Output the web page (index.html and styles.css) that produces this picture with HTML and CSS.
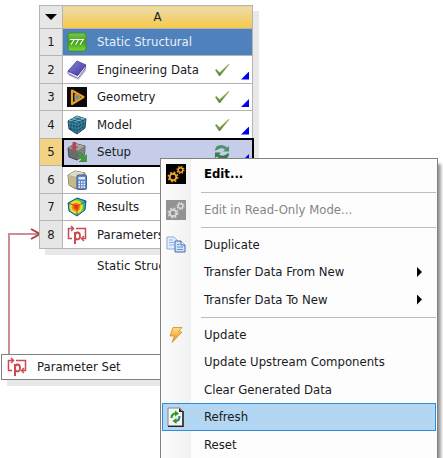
FILE: index.html
```
<!DOCTYPE HTML>
<html lang="en">
<head>
<title>Project Schematic</title>
<meta charset="utf-8" />
<link rel="stylesheet" href="styles.css">
</head>
<body>
<!-- shared icons -->
<svg class="defs" aria-hidden="true">
  <defs>
    <linearGradient id="gGreen" x1="0" y1="0" x2="0" y2="1"><stop offset="0" stop-color="#7cc94a"/><stop offset=".5" stop-color="#3fa01c"/><stop offset="1" stop-color="#7ed83c"/></linearGradient>
    <linearGradient id="gBook" x1="0" y1="0" x2="1" y2="1"><stop offset="0" stop-color="#8a85dc"/><stop offset="1" stop-color="#3c349c"/></linearGradient>
    <linearGradient id="gBolt" x1="0" y1="0" x2="0" y2="1"><stop offset="0" stop-color="#ffe07a"/><stop offset="1" stop-color="#ef8a1c"/></linearGradient>
    <linearGradient id="gTick" x1="0" y1="0" x2="0" y2="1"><stop offset="0" stop-color="#9dbb64"/><stop offset="1" stop-color="#5f8430"/></linearGradient>
    <radialGradient id="gHeat" cx=".45" cy=".5" r=".6"><stop offset="0" stop-color="#f0201a"/><stop offset=".3" stop-color="#f8761c"/><stop offset=".5" stop-color="#f4ee30"/><stop offset=".7" stop-color="#35c83c"/><stop offset=".85" stop-color="#24b8c8"/><stop offset="1" stop-color="#2048d8"/></radialGradient>
  </defs>
  <symbol id="tick" viewBox="0 0 16 14"><path d="M1 7 L2.500 6 L5.500 9.500 L14.500 1 L15.500 1.500 L6 13 H5 Z" fill="url(#gTick)"/></symbol>
  <symbol id="param" viewBox="0 0 20 20">
    <g fill="none" stroke="#cc4a50" stroke-width="1.500">
      <path d="M5 13.500 H1.500 V3.500 H6"/><path d="M4 1 L6.500 3.500 L4 6"/>
      <path d="M9 3.500 H18.500 V13.500 H15"/><path d="M17 11 L14.500 13.500 L17 16"/>
      <path d="M8 7 V19" stroke-width="2"/><ellipse cx="10.500" cy="11" rx="2.500" ry="3.500" stroke-width="1.800"/>
    </g>
  </symbol>
  <symbol id="gears" viewBox="0 0 20 20">
    <g fill="none" stroke="currentColor">
      <circle cx="7" cy="13" r="3.300" stroke-width="2"/>
      <circle cx="7" cy="13" r="4.800" stroke-width="1.400" stroke-dasharray="1.885 1.885"/>
      <circle cx="14.500" cy="6" r="2.300" stroke-width="1.500"/>
      <circle cx="14.500" cy="6" r="3.500" stroke-width="1.200" stroke-dasharray="1.374 1.374"/>
    </g>
  </symbol>
</svg>

<main class="schematic">
  <!-- link from the parameter set to the system -->
  <svg class="connector" viewBox="0 0 36 128" aria-hidden="true">
    <path d="M2 128 V8 H32" fill="none" stroke="#cb8f91" stroke-width="2"/>
    <path d="M24 3 L33 8 L24 13" fill="none" stroke="#a54246" stroke-width="2"/>
  </svg>

  <section class="system">
    <table class="cells">
      <thead>
        <tr><th><button class="drop" aria-label="System menu"></button></th><th class="letter">A</th></tr>
      </thead>
      <tbody>
        <tr class="title"><th>1</th><td><div class="cell">
          <svg class="icon" viewBox="0 0 20 20"><rect x="1" y="1" width="18" height="18" rx="2.500" fill="url(#gGreen)" stroke="#3d9420"/><path d="M3 7.500 H17 M7 8 L4 12.500 M11.500 8 L8.500 12.500 M16 8 L13 12.500" stroke="#fff" stroke-width="1.200" fill="none"/></svg>
          <span class="name">Static Structural</span></div></td></tr>
        <tr><th>2</th><td><div class="cell">
          <svg class="icon" viewBox="0 0 20 20"><path d="M2 14 L11 19.500 L19 8 V10.500 L11.500 20 L2 15.500Z" fill="#bbb"/><path d="M1 11 L10.500 15.500 L18.500 5 V8 L11 18.500 L1 13.500Z" fill="#eceaf6" stroke="#4c459c" stroke-width=".8"/><path d="M1 11 L10 1 L19 5 L10.500 15.500Z" fill="url(#gBook)" stroke="#443c9c" stroke-width=".8"/></svg>
          <span class="name">Engineering Data</span><svg class="state"><use href="#tick"/></svg><i class="corner"></i></div></td></tr>
        <tr><th>3</th><td><div class="cell">
          <svg class="icon" viewBox="0 0 20 20"><path d="M0 0H20V20H0Z" fill="#0b0b0b"/><path d="M5 3.500 L16.500 10 L5 17Z" fill="none" stroke="#e9a02c" stroke-width="2.200" stroke-linejoin="round"/><path d="M8 7 L13 10 L8 13.500Z" fill="#2f9ccc" stroke="#e9a02c"/></svg>
          <span class="name">Geometry</span><svg class="state"><use href="#tick"/></svg><i class="corner"></i></div></td></tr>
        <tr><th>4</th><td><div class="cell">
          <svg class="icon" viewBox="0 0 20 20"><path d="M1 6 L10 1 L19 4 L18 13 L10 19 L2 14Z" fill="#3b87a8" stroke="#1c4f68" stroke-linejoin="round"/><path d="M1 6 L10 1 L19 4 L10 8Z" fill="#71b8d2"/><path d="M10 8V19 M1 6 L10 8 L19 4 M4 4.500 L13 7 M7 2.500 L16 5.500 M4 7V15 M7 7.500V17 M13 7V17 M16 5.500V15 M1.500 10 L10 12 L18.500 8 M2 13 L10 15.500 L18 11 M14 2.500 L5 7" stroke="#183f54" stroke-width=".7" fill="none"/></svg>
          <span class="name">Model</span><svg class="state"><use href="#tick"/></svg><i class="corner"></i></div></td></tr>
        <tr class="selected"><th>5</th><td><div class="cell">
          <svg class="icon" viewBox="0 0 20 20"><path d="M1 6 L8 1.500 L18 4 L17.500 13 L10 18 L2 15Z" fill="#6c6c6c" stroke="#484848" stroke-linejoin="round"/><path d="M1 6 L8 1.500 L18 4 L11 8.500Z" fill="#a8a8a8"/><path d="M11 8.500V17.500 L17.500 13 L18 4Z" fill="#808080"/><path d="M5.500 0H9V4.500H11.500L7.500 9L3 4.500H5.500Z" fill="#b44a50"/><path d="M10 12.500 L13 10 L17.500 14.500 L19.500 12.500 V20 H12 L14.500 17.500Z" fill="#3f9a42" stroke="#2b7b30" stroke-width=".5"/></svg>
          <span class="name">Setup</span>
          <svg class="state" viewBox="0 0 16 14"><path d="M1 6 Q1 0 7 0 Q11 0 13 2.500 L15 1 V6.500 H9 L11 4.500 Q8 2.500 5 4 L1 6Z" fill="#4c9468"/><path d="M15 8 Q15 14 9 14 Q5 14 3 11.500 L1 13 V7.500 H7 L5 9.500 Q8 11.500 11 10Z" fill="#397a50"/></svg><i class="corner"></i></div></td></tr>
        <tr><th>6</th><td><div class="cell">
          <svg class="icon" viewBox="0 0 20 20"><path d="M1 5 L8 1 L18 3 L17 13 L9 19 L2 15Z" fill="#a79f78" stroke="#736b4b" stroke-linejoin="round"/><path d="M1 5 L8 1 L18 3 L9 7Z" fill="#e2dcbc"/><path d="M9 7V18.500 L2 15 L1 5Z" fill="#c2b98e"/><rect x="10" y="5" width="9.500" height="14.500" rx="1" fill="#6387c8" stroke="#4465a6"/><path d="M11.500 7H18V9.500H11.500Z" fill="#dbe9ff"/><path d="M11.500 12H18 M11.500 14.500H18 M11.500 17H18" stroke="#fff" stroke-width="1.500" stroke-dasharray="1.500 1"/></svg>
          <span class="name">Solution</span></div></td></tr>
        <tr><th>7</th><td><div class="cell">
          <svg class="icon" viewBox="0 0 20 20"><path d="M1 6 L10 1 L19 4 L18 13 L10 19 L2 14Z" fill="url(#gHeat)" stroke="#1e4ab0" stroke-linejoin="round"/><path d="M10 9V18 M2 6.500 L10 9 L18 5" stroke="#a33818" stroke-width=".8" fill="none"/></svg>
          <span class="name">Results</span></div></td></tr>
        <tr><th>8</th><td><div class="cell">
          <svg class="icon"><use href="#param"/></svg>
          <span class="name">Parameters</span></div></td></tr>
      </tbody>
    </table>
    <p class="caption">Static Structural</p>
  </section>

  <section class="param-set">
    <svg class="icon"><use href="#param"/></svg>
    <span>Parameter Set</span>
  </section>

  <div class="menu" role="menu">
    <button class="item default" role="menuitem"><span class="pic"><svg class="icon dark"><use href="#gears"/></svg></span>Edit...</button>
    <hr>
    <button class="item" role="menuitem" disabled><span class="pic"><svg class="icon grey"><use href="#gears"/></svg></span>Edit in Read-Only Mode...</button>
    <hr>
    <button class="item" role="menuitem"><span class="pic"><svg class="icon" viewBox="0 0 20 20"><path d="M1 2H8L11 5V14H1Z" fill="#e4effc" stroke="#91abd2"/><path d="M3 5H7 M3 7.500H8 M3 10H8" stroke="#89b2e3"/><path d="M9 6H15L19 10V17H9Z" fill="#d2e3f9" stroke="#4668ac"/><path d="M15 6V10H19" fill="#fff" stroke="#4668ac"/><path d="M11 9.500H13.500 M11 12H17 M11 14.500H17" stroke="#6996d6"/></svg></span>Duplicate</button>
    <button class="item sub" role="menuitem"><span class="pic"></span>Transfer Data From New</button>
    <button class="item sub" role="menuitem"><span class="pic"></span>Transfer Data To New</button>
    <hr>
    <button class="item" role="menuitem"><span class="pic"><svg class="icon" viewBox="0 0 20 20"><path d="M7 2.500H16L12.500 7H16L6 17.500L8.500 11H4Z" fill="url(#gBolt)" stroke="#cf8a2c" stroke-width=".8"/></svg></span>Update</button>
    <button class="item" role="menuitem"><span class="pic"></span>Update Upstream Components</button>
    <button class="item" role="menuitem"><span class="pic"></span>Clear Generated Data</button>
    <button class="item active" role="menuitem"><span class="pic"><svg class="icon" viewBox="0 0 20 20"><path d="M2 1H14L17 4V19H2Z" fill="#f4f4f4" stroke="#888"/><path d="M17 4V19.500H2" fill="none" stroke="#222" stroke-width="1.500"/><path d="M13 1V5H17Z" fill="#222"/><path d="M5.500 11 Q5.500 6.500 10 6.500" fill="none" stroke="#2b9a20" stroke-width="2"/><path d="M9 3.500L13 6.500L9 9.500Z" fill="#2b9a20"/><path d="M13.500 9 Q13.500 14 9.500 14" fill="none" stroke="#278a70" stroke-width="2"/><path d="M10.500 11V17L6.500 14Z" fill="#2b9a20"/></svg></span>Refresh</button>
    <button class="item" role="menuitem"><span class="pic"></span>Reset</button>
  </div>
</main>
</body>
</html>
```
FILE: styles.css
```
*{
	margin: 0;
	padding: 0;
	box-sizing: border-box;
}
body{
	background: #fff;
	color: #1a1a24;
	font: 13px/16px "DejaVu Sans Condensed", "Noto Sans", sans-serif;
}
button{
	border: 0;
	background: none;
	color: inherit;
	font: inherit;
}
.defs{
	position: absolute;
	width: 0;
	height: 0;
}
.icon{
	display: block;
	flex: none;
	width: 20px;
	height: 20px;
}

/* canvas */
.schematic{
	position: relative;
	height: 100vh;
	overflow: hidden;
}
.connector{
	position: absolute;
	left: 7px;
	top: 226px;
	width: 36px;
	height: 128px;
}

/* system block */
.system{
	position: absolute;
	left: 39px;
	top: 5px;
	width: 214px;
}
.cells{
	width: 100%;
	border-collapse: collapse;
	table-layout: fixed;
	background: #fff;
	border: 1px solid #b4b4b4;
	box-shadow: 6px 6px 0 #e8e8e8;
}
.cells tr{
	height: 27px;
}
.cells tbody tr:nth-child(even){
	height: 28px;
}
.cells thead tr{
	height: 23px;
}
.cells th{
	width: 23px;
	border: 1px solid #b4b4b4;
	background: #e6e6e6;
	font-weight: normal;
	text-align: center;
}
.cells td{
	border: 1px solid #b4b4b4;
}
.cells .letter{
	width: auto;
	background: linear-gradient(#ecdcae, #f6c848);
}
.drop{
	display: block;
	margin: 0 auto;
	width: 12px;
	height: 6px;
	background: #000;
	clip-path: polygon(0 0, 100% 0, 50% 100%);
}
.cell{
	position: relative;
	display: flex;
	align-items: center;
	height: 26px;
	padding: 0 22px 0 4px;
}
.cell .name{
	flex: 1;
	margin-left: 10px;
	white-space: nowrap;
}
.state{
	width: 16px;
	height: 14px;
}
.corner{
	position: absolute;
	right: 3px;
	bottom: 3px;
	width: 8px;
	height: 8px;
	background: #0000f0;
	clip-path: polygon(100% 0, 100% 100%, 0 100%);
}
.title td{
	background: #4f81bd;
	color: #e8eff8;
}
.cells .selected th{
	background: #f2d384;
}
.selected td{
	background: #c5cde8;
	outline: 2px solid #000;
	outline-offset: -1px;
}
.caption{
	margin: 9px 0 0 58px;
}

/* parameter set bar */
.param-set{
	position: absolute;
	left: 1px;
	top: 354px;
	display: flex;
	align-items: center;
	gap: 10px;
	width: 214px;
	height: 26px;
	padding-left: 5px;
	background: #fff;
	border: 1px solid #808080;
	box-shadow: 6px 6px 0 #e8e8e8;
}

/* context menu */
.menu{
	position: absolute;
	left: 160px;
	right: 5px;
	top: 158px;
	padding: 1px 1px 8px;
	border: 1px solid #808080;
	background: linear-gradient(90deg, #fcfcfc, #f1f1f1) 0 0 / 30px 100% no-repeat #fdfdfd;
	box-shadow: 3px 6px 3px #999;
}
.menu hr{
	height: 1px;
	margin: 4px 0 3px 39px;
	border: 0;
	background: #bdbdbd;
}
.item{
	display: flex;
	align-items: center;
	width: 100%;
	height: 27px;
	padding: 0 13px 0 3px;
	border: 1px solid transparent;
	text-align: left;
	white-space: nowrap;
}
.item:nth-child(even),
.item.default{
	height: 28px;
}
.pic{
	width: 38px;
}
.default{
	font-weight: bold;
	color: #000;
}
.item:disabled{
	color: #858585;
}
.dark{
	background: #000;
	color: #eba427;
}
.grey{
	background: #929292;
	color: #d8d8d8;
}
.sub::after{
	content: "";
	width: 5px;
	height: 10px;
	margin-left: auto;
	background: #000;
	clip-path: polygon(0 0, 100% 50%, 0 100%);
}
.active{
	background: #b3d6f2;
	border-color: #2c8ddd;
}
```
